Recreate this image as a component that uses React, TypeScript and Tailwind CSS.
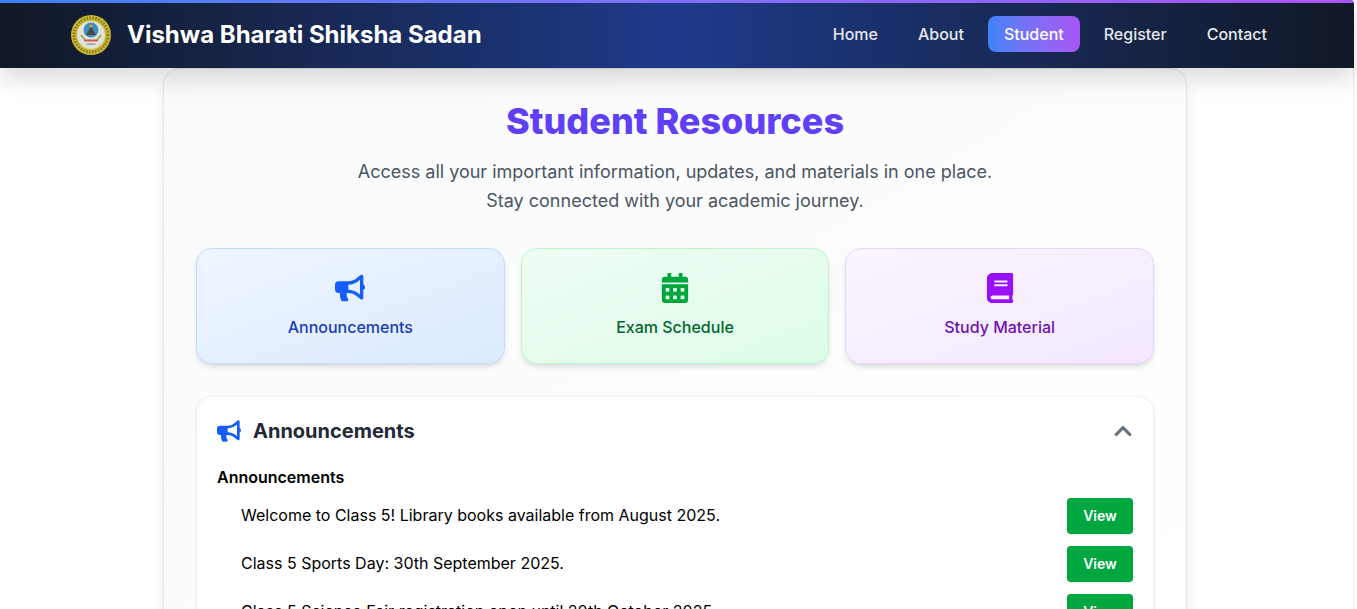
import { FaBullhorn, FaCalendarAlt, FaBook, FaChevronUp } from 'react-icons/fa';

const links = ['Home', 'About', 'Student', 'Register', 'Contact'];

const cards = [
    { label: 'Announcements', Icon: FaBullhorn, box: 'border-[#bfdbfe] from-[#eff6ff] to-[#dbeafe]', icon: 'text-[#155dfc]', text: 'text-[#193cb8]' },
    { label: 'Exam Schedule', Icon: FaCalendarAlt, box: 'border-[#b9f8cf] from-[#f0fdf4] to-[#dcfce7]', icon: 'text-[#00a63e]', text: 'text-[#016630]' },
    { label: 'Study Material', Icon: FaBook, box: 'border-[#e9d4ff] from-[#faf5ff] to-[#f3e8ff]', icon: 'text-[#9810fa]', text: 'text-[#6e11b0]' },
];

const items = [
    'Welcome to Class 5! Library books available from August 2025.',
    'Class 5 Sports Day: 30th September 2025.',
    'Class 5 Science Fair registration open until 20th October 2025.',
];

// rough stand-in for the school crest
function Crest() {
    return (
        <svg width="40" height="40" viewBox="0 0 40 40" className="shrink-0">
            <circle cx="20" cy="20" r="20" fill="#cdb92c" />
            <circle cx="20" cy="20" r="17" fill="none" stroke="#857b28" strokeWidth="3" strokeDasharray="1.5 1.5" />
            <circle cx="20" cy="20" r="14" fill="#dfe2da" />
            <circle cx="20" cy="15" r="7.5" fill="#3f8fbc" />
            <path d="M15 20 L18 15 L20 9 L22 15 L25 20 Z" fill="#4b4550" />
            <circle cx="20" cy="11" r="1.5" fill="#e2a12a" />
            <path d="M10 20 L14 25 M30 20 L26 25" stroke="#9a9c4a" strokeWidth="1.5" />
            <rect x="13" y="24.5" width="14" height="2" rx="1" fill="#cf5a4c" />
            <rect x="15.5" y="28.5" width="9" height="1.2" fill="#8a8a8a" />
        </svg>
    );
}

export default function App() {
    return (
        <div className="relative h-[609px] overflow-hidden bg-white font-['Inter',sans-serif]">
            <div className="absolute bottom-0 left-[1353px] top-0 w-px bg-[#ececec]" />
            <nav className="relative z-10 flex h-[68px] w-[1354px] items-center justify-between overflow-hidden rounded-tr-[4px] bg-gradient-to-r from-[#111827] via-[#1e3a8a] to-[#111827] pl-[71px] pr-[71px] shadow-[0_10px_25px_rgba(0,0,0,0.15)]">
                <div className="absolute inset-x-0 top-0 h-[3px] bg-gradient-to-r from-[#3b82f6] to-[#a855f7]" />
                <div className="mt-[2px] flex items-center gap-4">
                    <Crest />
                    <span className="text-2xl font-bold text-white">Vishwa Bharati Shiksha Sadan</span>
                </div>
                <div className="flex items-center gap-2">
                    {links.map((l) => (
                        <a
                            key={l}
                            className={
                                l === 'Student'
                                    ? 'rounded-lg bg-gradient-to-r from-[#3b82f6] to-[#a855f7] px-4 py-1.5 font-medium text-white'
                                    : 'rounded-lg px-4 py-1.5 font-medium text-[#e5e7eb]'
                            }
                        >
                            {l}
                        </a>
                    ))}
                </div>
            </nav>

            <main className="ml-[163px] w-[1024px] rounded-2xl border border-[#e5e7eb] bg-gradient-to-br from-[#f9fafb] to-white px-8 pt-8 pb-8 shadow-lg">
                <h1 className="text-center text-4xl font-extrabold leading-10 text-[#6040f6]">Student Resources</h1>
                <p className="mt-4 text-center text-lg leading-[29px] text-[#4b5563]">
                    Access all your important information, updates, and materials in one place.
                    <br />
                    Stay connected with your academic journey.
                </p>

                <div className="mt-[33px] grid grid-cols-3 gap-4">
                    {cards.map(({ label, Icon, box, icon, text }) => (
                        <div key={label} className={`flex h-[116px] flex-col items-center rounded-2xl border bg-gradient-to-br pt-6 shadow-md ${box}`}>
                            <Icon className={`text-[30px] ${icon}`} />
                            <span className={`mt-3 font-medium ${text}`}>{label}</span>
                        </div>
                    ))}
                </div>

                <section className="mt-8 rounded-2xl border border-[#f3f4f6] bg-white px-5 shadow-sm">
                    <div className="flex h-[67px] items-center justify-between">
                        <div className="flex items-center gap-3">
                            <FaBullhorn className="text-2xl text-[#155dfc]" />
                            <h2 className="text-xl font-bold text-[#1f2937]">Announcements</h2>
                        </div>
                        <FaChevronUp className="text-xl text-[#6b7280]" />
                    </div>
                    <h3 className="mt-[1px] font-semibold text-black">Announcements</h3>
                    <ul className="mt-[9px] flex flex-col gap-3 pl-6">
                        {items.map((t) => (
                            <li key={t} className="flex items-center justify-between">
                                <span className="relative -top-px text-black">{t}</span>
                                <button className="h-9 w-[66px] rounded bg-[#00a63e] text-sm font-semibold text-white shadow-sm">View</button>
                            </li>
                        ))}
                    </ul>
                </section>
            </main>
        </div>
    );
}
